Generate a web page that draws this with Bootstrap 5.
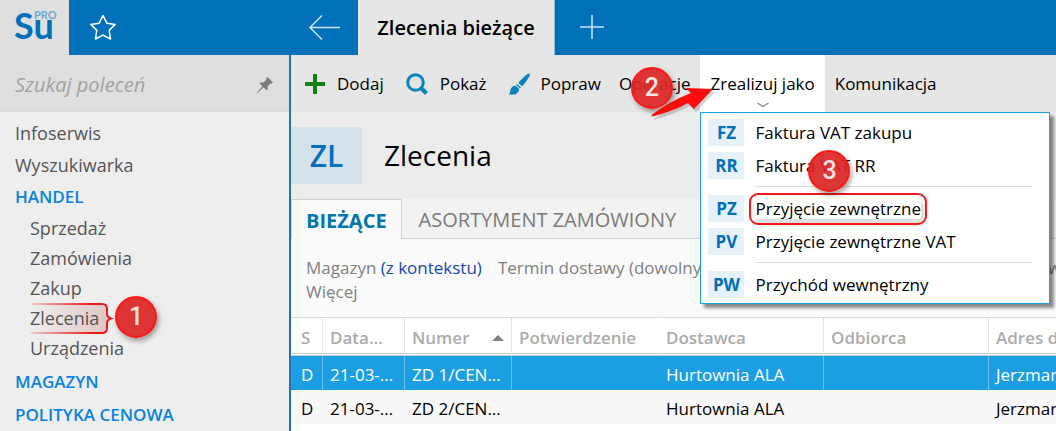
<!DOCTYPE html>
<html lang="pl">
<head>
<meta charset="utf-8">
<meta name="viewport" content="width=device-width, initial-scale=1">
<title>Zlecenia bieżące</title>
<link href="https://cdn.jsdelivr.net/npm/bootstrap@5.3.0/dist/css/bootstrap.min.css" rel="stylesheet">
<style>
  body { font-family: "Open Sans", "Noto Sans", sans-serif; font-size: 17px; line-height: 24px; color: #000; background: #ececec; overflow: hidden; }
  a { color: inherit; text-decoration: none; }
  button { border: 0; background: none; padding: 0; color: inherit; white-space: nowrap; }
  svg { display: block; flex: none; }

  .topbar { height: 55px; background: #0070b9; }
  .side-w { width: 291px; flex: none; }
  .brand-box { width: 69px; background: #dfdfdf; color: #0070b9; padding-left: 14px; font: 700 36px/51px Lato, sans-serif; }
  .brand-pro { left: 34px; top: 9px; font: 700 11px/12px Lato, sans-serif; color: #6aaad2; }
  .star-btn { width: 68px; }
  .back-btn { width: 67px; }
  .plus-btn { width: 74px; }
  .doc-tab { width: 197px; background: #e6e6e6; border-right: 1px solid #8bbcdc; font-size: 20px; font-weight: 600; }

  .sidebar { background: #eee; border-right: 2px solid #2073ae; color: #555; }
  .search-row { height: 57px; background: #dfdfdf; border-bottom: 1px solid #dadada; padding: 3px 15px 0; }
  .search-row input { border: 0; background: none; outline: 0; font-size: 20px; font-style: italic; min-width: 0; padding: 0; }
  .search-row input::placeholder { color: #a3a3a3; opacity: 1; }
  .side-nav { padding: 5px 15px; }
  .side-nav a { display: block; font-size: 18px; line-height: 32px; }
  .side-nav .group-link { font-size: 17px; font-weight: 600; color: #0a82dc; }
  .side-nav .sub-list { padding: 0 0 2px 15px; }
  .side-nav .sub-list a { line-height: 30px; }
  .side-nav .sub-list ~ .group-link { line-height: 33px; }
  .mark-brace { left: 0; top: 0; }

  .step { width: 42px; height: 42px; border-radius: 50%; border: 2px solid #fb1717; background: rgba(220, 38, 38, .93); color: #fbe3e3; font: 500 25px/38px Roboto, sans-serif; text-align: center; box-shadow: 2px 3px 5px rgba(0, 0, 0, .35); position: absolute; z-index: 30; pointer-events: none; }
  .step-1 { left: 85px; top: -7px; }
  .step-2 { left: 22px; top: 12px; }
  .step-3 { left: 107px; top: 37px; }
  .pointer-arrow { left: -50px; top: 26px; z-index: 31; pointer-events: none; }

  .toolbar { height: 57px; background: #e6e6e6; }
  .tool { padding: 0 10px; height: 57px; }
  .tool-icon { gap: 12px; padding: 0 8px 0 14px; }
  .tool-icon + .tool-icon + .tool-icon { gap: 11px; padding-left: 13px; }
  .tool-open { background: #fff; }
  .tool-caret { left: 50%; bottom: 4px; margin-left: -6px; }

  .drop-list { left: 0; top: 57px; width: 350px; z-index: 20; background: #fff; border: 1px solid #1ba1e2; padding: 3px 7px 2px; box-shadow: 4px 4px 3px rgba(0, 0, 0, .45); }
  .drop-list button { display: flex; align-items: center; width: 100%; height: 33px; gap: 11px; text-align: left; }
  .code { width: 36px; height: 27px; line-height: 27px; text-align: center; background: #e6f1f8; color: #0070b9; font-weight: 700; }
  .drop-list hr { margin: 4px 10px 5px 47px; border-top: 1px solid #ddd; opacity: 1; }
  .boxed { outline: 2px solid #f01818; outline-offset: 4px; border-radius: 3px; line-height: 20px; box-shadow: 2px 4px 5px 2px rgba(0, 0, 0, .14); }

  .head-row { height: 87px; padding-top: 15px; }
  .head-code { width: 71px; height: 57px; background: #d6e2ea; color: #0070b9; font-size: 30px; font-weight: 600; }
  .head-title { font-size: 28px; line-height: 57px; font-weight: 400; margin: 0 0 0 22px; }
  .tab-row { background: #f2f2f2; border-bottom: 1px solid #d0d0d0; height: 40px; }
  .tab-row button { font-size: 20px; color: #7a7a7a; height: 40px; padding: 2px 17px 0; }
  .tab-row .tab-on { background: #fafafa; border: 1px solid #d0d0d0; border-bottom: 0; color: #0076ad; font-weight: 700; padding: 2px 14px 0; }
  .filters { background: #fafafa; color: #808080; padding: 17px 0 13px 15px; overflow: hidden; white-space: nowrap; }
  .filters .ctx { color: #1546b8; }
  .last-filter { width: 8px; }
  .sheet { background: #fff; }

  .grid-table { table-layout: fixed; width: 100%; border-collapse: separate; border-spacing: 0; }
  .grid-table th, .grid-table td { padding: 4px 7px 0; overflow: hidden; white-space: nowrap; border-right: 1px solid transparent; }
  .grid-table th { height: 39px; border-top: 1px solid #ddd; border-bottom: 3px double #ccc; font-weight: 600; color: #ababab; border-right: 1px dotted #ccc; }
  .grid-table th:first-child, .grid-table td:first-child { padding-left: 10px; }
  .grid-table th:last-child, .grid-table td:last-child { border-right: 0; padding-right: 0; }
  .grid-table td { height: 34px; background: #f8f8f8; }
  .grid-table .picked td { background: #1c9fe2; color: #fff; border-right-color: #6cc0ec; }
  .grid-table .no-line, .grid-table .picked .no-line { border-right-color: transparent; }
  .c-s { width: 32px; } .c-date { width: 82px; } .c-num { width: 107px; } .c-conf { width: 147px; } .c-sup { width: 165px; }
</style>
</head>
<body class="vh-100 d-flex flex-column">
<header class="topbar d-flex flex-shrink-0">
  <div class="side-w d-flex">
    <div class="brand-box position-relative">Su<span class="brand-pro position-absolute">PRO</span></div>
    <button class="star-btn d-flex align-items-center justify-content-center" aria-label="Ulubione">
      <svg width="28" height="28" viewBox="0 0 28 28" fill="none" stroke="#fff" stroke-width="1.5" stroke-linejoin="round"><path d="M14 1.500l3.900 7.700 8.300 1.200-6 6 1.300 8.600-7.500-3.800L6.500 25l1.300-8.600-6-6 8.300-1.200z"/></svg>
    </button>
  </div>
  <button class="back-btn d-flex align-items-center justify-content-center" aria-label="Wstecz">
    <svg width="32" height="26" viewBox="0 0 32 26" fill="none" stroke="#cfe4f2" stroke-width="1.500"><path d="M31 12.500H1M13 .5l-12 12 12 12"/></svg>
  </button>
  <button class="doc-tab">Zlecenia bieżące</button>
  <button class="plus-btn d-flex align-items-center justify-content-center" aria-label="Nowa karta">
    <svg width="24" height="26" viewBox="0 0 24 26" stroke="#cfe4f2" stroke-width="1.500"><path d="M12 0v24M0 12h24"/></svg>
  </button>
</header>

<div class="d-flex flex-grow-1" style="min-height:0">
  <aside class="sidebar side-w">
    <div class="search-row d-flex align-items-center">
      <input class="flex-grow-1" type="text" placeholder="Szukaj poleceń" aria-label="Szukaj poleceń">
      <svg width="18" height="18" viewBox="0 0 18 18" fill="#7d7d7d"><path d="M11.500 1l5.500 5.500-1.800 1.200-.8-.2-2.700 3c.4 1.800.1 3-.9 4l-3.300-3.300L2 16.500.8 17.200 1.500 16l5-5.700L3.400 7.200c1.200-1 2.400-1.200 4-.8l3-2.700-.3-1z"/></svg>
    </div>
    <nav class="side-nav">
      <a href="#">Infoserwis</a>
      <a href="#">Wyszukiwarka</a>
      <a href="#" class="group-link">HANDEL</a>
      <div class="sub-list">
        <a href="#">Sprzedaż</a>
        <a href="#">Zamówienia</a>
        <a href="#">Zakup</a>
        <a href="#" class="position-relative">
          <svg class="mark-brace position-absolute" width="84" height="34" viewBox="0 0 84 34" fill="none">
            <defs>
              <linearGradient id="fadeLine" gradientUnits="userSpaceOnUse" x1="0" y1="0" x2="78" y2="0"><stop offset="0" stop-color="#f01818" stop-opacity=".15"/><stop offset=".8" stop-color="#f01818"/></linearGradient>
              <linearGradient id="fadeFill" x1="0" x2="1"><stop offset="0" stop-color="#e03030" stop-opacity="0"/><stop offset="1" stop-color="#a03030" stop-opacity=".22"/></linearGradient>
            </defs>
            <path d="M1 1h71q5 0 5 5v5q0 3 4 4.500-4 1.500-4 4.500v5q0 5-5 5H1z" fill="url(#fadeFill)"/>
            <path d="M1 1h71q5 0 5 5v5q0 3 4 4.500-4 1.500-4 4.500v5q0 5-5 5H1" stroke="url(#fadeLine)" stroke-width="2"/>
          </svg>
          <span class="position-relative">Zlecenia</span><span class="step step-1">1</span>
        </a>
        <a href="#">Urządzenia</a>
      </div>
      <a href="#" class="group-link">MAGAZYN</a>
      <a href="#" class="group-link">POLITYKA CENOWA</a>
    </nav>
  </aside>

  <main class="flex-grow-1 d-flex flex-column" style="min-width:0">
    <div class="toolbar d-flex">
      <button class="tool tool-icon d-flex align-items-center">
        <svg width="20" height="20" viewBox="0 0 20 20" fill="#118011"><path d="M8 0h4v8h8v4h-8v8H8v-8H0V8h8z"/></svg>Dodaj
      </button>
      <button class="tool tool-icon d-flex align-items-center">
        <svg width="22" height="22" viewBox="0 0 22 22" fill="none" stroke="#0a84bd"><circle cx="9.500" cy="9.500" r="7.800" stroke-width="3"/><path d="M15 15l5.500 5.500" stroke-width="4.200"/></svg>Pokaż
      </button>
      <button class="tool tool-icon d-flex align-items-center">
        <svg width="22" height="22" viewBox="0 0 22 22" fill="#0a84bd"><path d="M21.500.5c.6.600.5 1.600 0 2.500-2 4-4.300 7.300-7.500 10.200L10.300 10C13 6.500 16 3.500 19.500 1c.8-.5 1.500-.8 2-.5zM9.200 11l3.800 3.400-1 1L8.200 12zM7.300 12.500l3.700 3.300c.3 3.600-2.500 5.800-6 5.800H0c2-.9 2-2.300 2.300-4.200.5-2.900 2.500-4.700 5-4.900z"/></svg>Popraw
      </button>
      <button class="tool position-relative">Operacje<span class="step step-2">2</span></button>
      <div class="position-relative">
        <button class="tool tool-open position-relative" aria-expanded="true">Zrealizuj jako
          <svg class="tool-caret position-absolute" width="12" height="6" viewBox="0 0 12 6" fill="none" stroke="#888" stroke-width="1.300"><path d="M.5 1L6 4.500 11.500 1"/></svg>
        </button>
        <svg class="pointer-arrow position-absolute" width="70" height="42" viewBox="0 0 70 42"><path d="M4 38Q24 24 43 15L38 10 65 11 46 31 40 25Q25 33 4 39Z" fill="#000" opacity=".16"/><path d="M1.500 34Q20 20 41 12L36 7 63 8 44 28 38 22Q24 30 2 35.500Z" fill="#fe0b0b"/></svg>
        <div class="drop-list position-absolute">
          <button><span class="code">FZ</span>Faktura VAT zakupu</button>
          <button><span class="code">RR</span>Faktura VAT RR</button>
          <hr>
          <button><span class="code">PZ</span><span class="boxed">Przyjęcie zewnętrzne</span></button>
          <button><span class="code">PV</span>Przyjęcie zewnętrzne VAT</button>
          <hr>
          <button><span class="code">PW</span>Przychód wewnętrzny</button>
          <span class="step step-3">3</span>
        </div>
      </div>
      <button class="tool">Komunikacja</button>
    </div>

    <div class="head-row d-flex">
      <div class="head-code d-flex align-items-center justify-content-center">ZL</div>
      <h1 class="head-title">Zlecenia</h1>
    </div>
    <div class="tab-row d-flex">
      <button class="tab-on">BIEŻĄCE</button>
      <button>ASORTYMENT ZAMÓWIONY</button>
    </div>
    <div class="filters">
      <div class="d-flex">
        <span>Magazyn <a href="#" class="ctx">(z kontekstu)</a></span>
        <span class="ms-3">Termin dostawy (dowolny)</span>
        <span class="last-filter ms-auto">w</span>
      </div>
      <a href="#">Więcej</a>
    </div>
    <div class="sheet flex-grow-1">
      <table class="grid-table">
        <colgroup><col class="c-s"><col class="c-date"><col class="c-num"><col class="c-conf"><col class="c-sup"><col class="c-sup"><col></colgroup>
        <thead>
          <tr><th>S</th><th>Data...</th><th><div class="d-flex align-items-center justify-content-between">Numer<svg width="12" height="6" viewBox="0 0 12 6" fill="#808080"><path d="M6 0l6 6H0z"/></svg></div></th><th class="no-line">Potwierdzenie</th><th>Dostawca</th><th>Odbiorca</th><th>Adres dostawy</th></tr>
        </thead>
        <tbody>
          <tr class="picked"><td>D</td><td>21-03-...</td><td>ZD 1/CEN...</td><td class="no-line"></td><td>Hurtownia ALA</td><td></td><td>Jerzmanowska</td></tr>
          <tr><td>D</td><td>21-03-...</td><td>ZD 2/CEN...</td><td></td><td>Hurtownia ALA</td><td></td><td>Jerzmanowska</td></tr>
        </tbody>
      </table>
    </div>
  </main>
</div>
<script src="https://cdn.jsdelivr.net/npm/bootstrap@5.3.0/dist/js/bootstrap.bundle.min.js"></script>
</body>
</html>
